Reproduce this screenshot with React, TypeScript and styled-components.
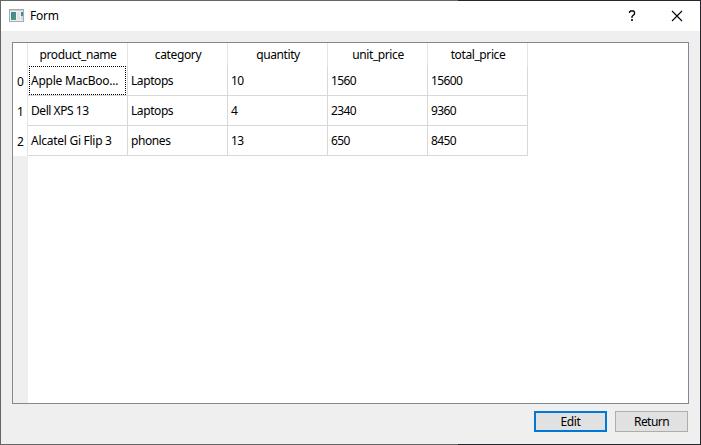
import React from 'react';
import styled, { createGlobalStyle } from 'styled-components';

const GlobalStyle = createGlobalStyle`
  * { box-sizing: border-box; }
  body { margin: 0; background: #666; overflow: hidden; }
`;

const Backdrop = styled.div`
  width: 701px;
  height: 445px;
  padding: 1px;
  background: linear-gradient(to right, #666 458px, #26262a 458px);
  font-family: 'Noto Sans', 'Open Sans', sans-serif;
  font-size: 12px;
  color: #000;
`;

const Window = styled.div`
  display: flex;
  flex-direction: column;
  width: 699px;
  height: 443px;
  background: #efefef;
`;

const TitleBar = styled.header`
  display: flex;
  align-items: center;
  height: 30px;
  flex: none;
  padding: 0 17px 0 8px;
  background: #fff;
`;

const Title = styled.h1`
  flex: 1;
  margin: 0 0 0 5px;
  font-size: 12px;
  font-weight: 400;
  line-height: 30px;
  letter-spacing: -0.25px;
`;

const TitleAction = styled.button`
  display: flex;
  padding: 0;
  border: 0;
  margin-left: 35px;
  background: none;
`;

const Content = styled.main`
  display: flex;
  flex-direction: column;
  gap: 7px;
  padding: 11px 11px 0 11px;
`;

const TableFrame = styled.section`
  display: grid;
  grid-template-columns: 15px 1fr;
  height: 362px;
  border: 1px solid #828790;
  background: #fff;
`;

const RowHeaders = styled.div`
  display: flex;
  flex-direction: column;
  background: #efefef;
`;

const Corner = styled.div`
  height: 23px;
  background: #fff;
  border-right: 1px solid #e5e5e5;
`;

const RowHeader = styled.div`
  height: 30px;
  padding-left: 4px;
  line-height: 31px;
  background: #fff;
  border-right: 1px solid #e5e5e5;
  letter-spacing: -0.4px;
`;

const Grid = styled.div`
  display: grid;
  grid-template-columns: repeat(5, 100px);
  grid-template-rows: 23px repeat(3, 30px);
`;

const ColumnHeader = styled.div<{ $tracking: number }>`
  padding-left: 1px;
  border-right: 1px solid #e5e5e5;
  text-align: center;
  line-height: 24px;
  white-space: nowrap;
  letter-spacing: ${p => p.$tracking}px;
`;

const Cell = styled.div<{ $tracking: number; $focused?: boolean }>`
  display: flex;
  padding: ${p => (p.$focused ? '0 1px 0 1px' : '0 0 0 3px')};
  border-right: 1px solid #d8d8d8;
  border-bottom: 1px solid #d8d8d8;
  line-height: 29px;
  white-space: nowrap;
  letter-spacing: ${p => p.$tracking}px;
`;

const FocusRing = styled.span`
  flex: 1;
  height: 29px;
  padding-left: 1px;
  border: 1px dotted #000;
  line-height: 27px;
`;

const Actions = styled.footer`
  display: flex;
  justify-content: flex-end;
  gap: 8px;
  padding-right: 1px;
`;

const Button = styled.button<{ $primary?: boolean; $tracking: number }>`
  width: 73px;
  height: 21px;
  padding: 0;
  border: ${p => (p.$primary ? '2px solid #0078d7' : '1px solid #adadad')};
  background: #e1e1e1;
  color: #000;
  font: inherit;
  line-height: ${p => (p.$primary ? 17 : 19)}px;
  letter-spacing: ${p => p.$tracking}px;
`;

const AppIcon = () => (
  <svg width="16" height="14" viewBox="0 0 16 14">
    <defs>
      <linearGradient id="pane" x1="0" y1="0" x2="1" y2="1">
        <stop offset="0" stopColor="#4d78a8" />
        <stop offset="1" stopColor="#3fa36c" />
      </linearGradient>
    </defs>
    <rect x=".5" y=".5" width="14" height="12" fill="#eef0f2" stroke="#a5abb1" />
    <path d="M1 1.5h13" stroke="#c9ced3" />
    <rect x="2" y="3" width="5" height="8" fill="url(#pane)" />
    <rect x="8" y="3" width="3" height="8" fill="#e2e4e6" />
    <rect x="12" y="3" width="2" height="4" fill="url(#pane)" />
    <rect x="12" y="7" width="2" height="4" fill="#d4dcd9" />
  </svg>
);

const columns = [
  { name: 'product_name', tracking: -0.4 },
  { name: 'category', tracking: -0.35 },
  { name: 'quantity', tracking: -0.4 },
  { name: 'unit_price', tracking: -0.4 },
  { name: 'total_price', tracking: -0.4 },
];

const rows = [
  ['Apple MacBoo...', 'Laptops', '10', '1560', '15600'],
  ['Dell XPS 13', 'Laptops', '4', '2340', '9360'],
  ['Alcatel Gi Flip 3', 'phones', '13', '650', '8450'],
];

const cellTracking: Record<string, number> = {
  'Apple MacBoo...': -0.23,
  'Dell XPS 13': -0.45,
  'Alcatel Gi Flip 3': -0.27,
  Laptops: -0.42,
  phones: -0.4,
};

export default function App() {
  return (
    <Backdrop>
      <GlobalStyle />
      <Window>
        <TitleBar>
          <AppIcon />
          <Title>Form</Title>
          <TitleAction aria-label="Help">
            <svg width="8" height="12" viewBox="0 0 8 12" fill="none" stroke="#000">
              <path d="M1.5 3V2L2.5 1h3L6.5 2v2L4 6.5V8" strokeWidth="1.3" />
              <path d="M4 9v2" strokeWidth="1.6" />
            </svg>
          </TitleAction>
          <TitleAction aria-label="Close">
            <svg width="12" height="12" viewBox="0 0 12 12" stroke="#000">
              <path d="M1 1l10 10M11 1L1 11" strokeWidth="1.1" />
            </svg>
          </TitleAction>
        </TitleBar>
        <Content>
          <TableFrame>
            <RowHeaders>
              <Corner />
              {rows.map((_, i) => <RowHeader key={i}>{i}</RowHeader>)}
            </RowHeaders>
            <Grid>
              {columns.map(c => <ColumnHeader key={c.name} $tracking={c.tracking}>{c.name}</ColumnHeader>)}
              {rows.map((row, r) => row.map((value, c) => {
                const focused = r === 0 && c === 0;
                return (
                  <Cell key={`${r}-${c}`} $tracking={cellTracking[value] ?? -0.6} $focused={focused}>
                    {focused ? <FocusRing>{value}</FocusRing> : value}
                  </Cell>
                );
              }))}
            </Grid>
          </TableFrame>
          <Actions>
            <Button $primary $tracking={-0.4}>Edit</Button>
            <Button $tracking={-0.55}>Return</Button>
          </Actions>
        </Content>
      </Window>
    </Backdrop>
  );
}
